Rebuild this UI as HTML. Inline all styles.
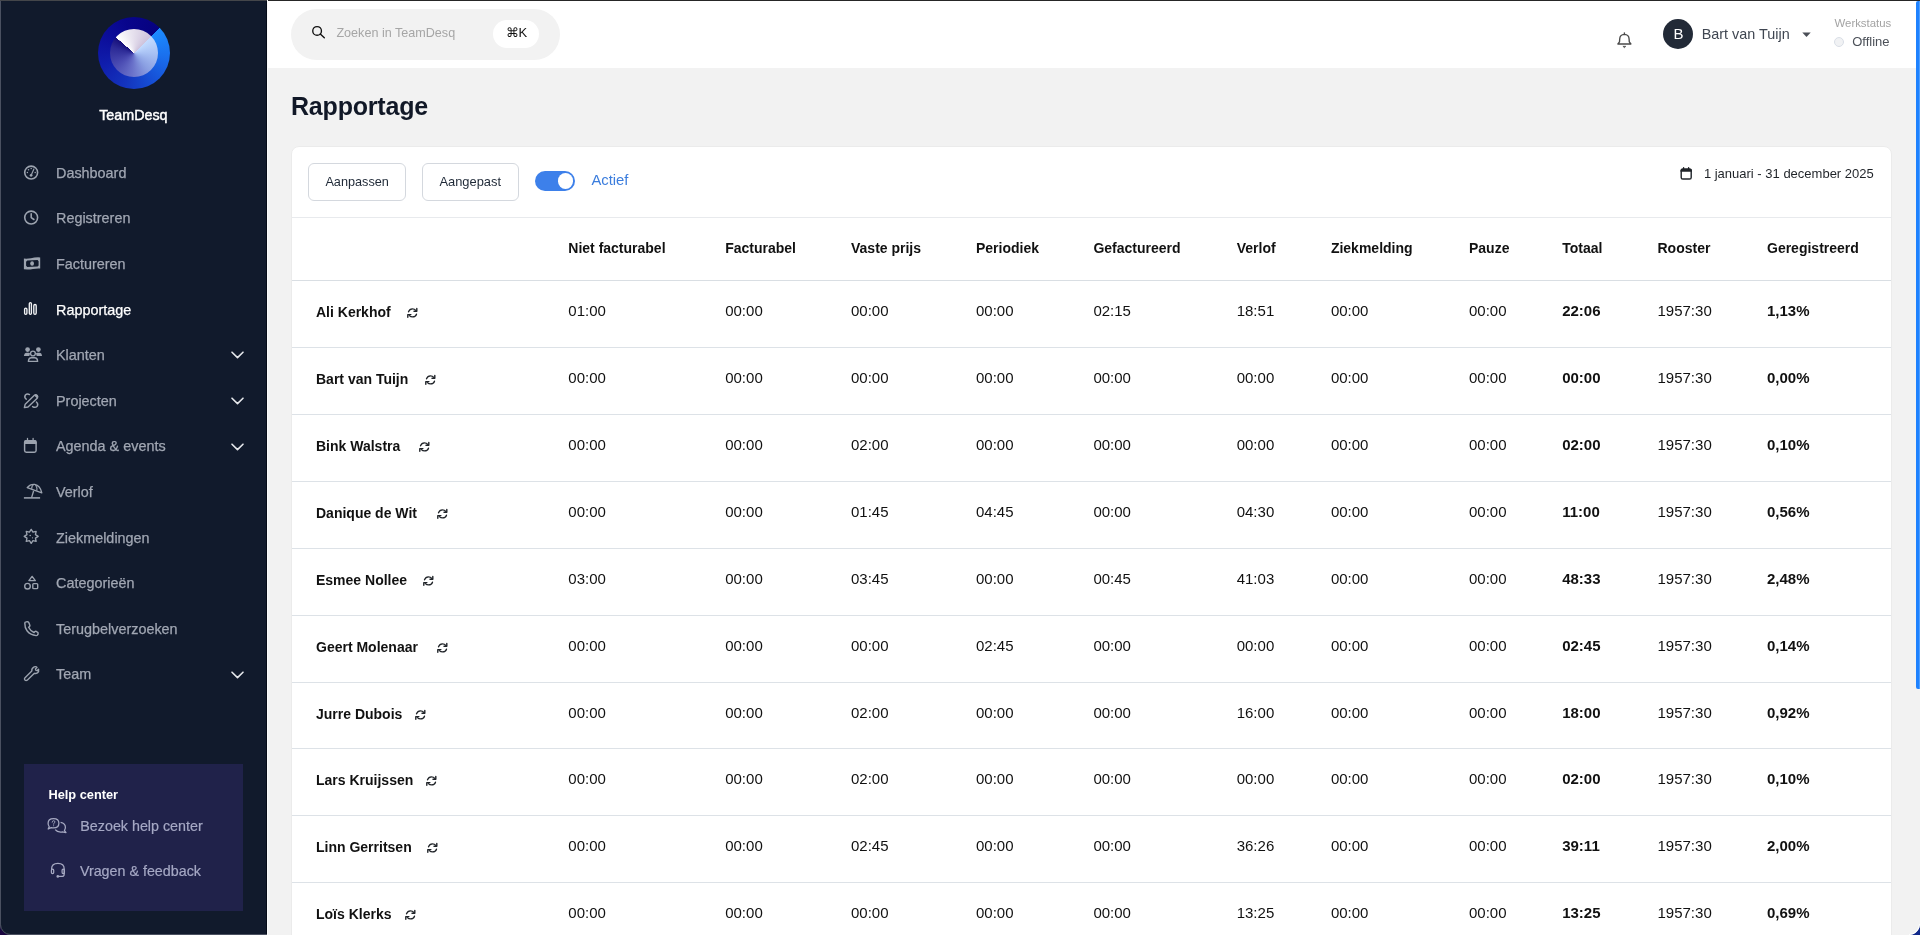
<!DOCTYPE html>
<html><head><meta charset="utf-8"><title>Rapportage - TeamDesq</title>
<style>
html,body{margin:0;padding:0;width:1920px;height:935px;overflow:hidden;background:#f2f2f2;font-family:"Liberation Sans", sans-serif;}
body{position:relative;}
.t{position:absolute;white-space:nowrap;}
.ic{position:absolute;overflow:visible;}
.a{position:absolute;}
</style></head>
<body>
<div class="a" style="left:0;top:0;width:1920px;height:935px;will-change:transform">
<div class="a" style="left:0;top:0;width:267px;height:935px;background:#111a2c"></div>
<div class="a" style="left:0;top:0;width:1px;height:935px;background:#4a5060"></div>
<div class="a" style="left:266px;top:0;width:1px;height:935px;background:#050b18"></div>
<div class="a" style="left:98px;top:17px;width:72px;height:72px;border-radius:50%;background:conic-gradient(from 45deg,#1c8cff 0deg,#1a70ee 50deg,#1650d6 100deg,#1434bd 150deg,#101fae 200deg,#0c0f9c 250deg,#08058c 300deg,#06017f 359.5deg)"></div>
<div class="a" style="left:110px;top:29px;width:48px;height:48px;border-radius:50%;background:conic-gradient(from 45deg,#c4dcff 0deg,#a9c2f4 45deg,#8a9fe2 95deg,#6a72ca 140deg,#4a4bb2 190deg,#2c2a96 240deg,#160f7a 265.5deg,#ffffff 266deg,#ece8f2 300deg,#cfc4dd 359.5deg)"></div>
<div class="t" style="left:99.2px;top:106.6px;font-size:14.3px;line-height:17px;color:#fff;font-weight:400;-webkit-text-stroke:0.45px #fff">TeamDesq</div>
<svg class="ic" style="left:22px;top:164px" width="18" height="18" viewBox="22 164 18 18"><circle cx="31.16" cy="172.55" r="6.45" fill="none" stroke="#9ca3af" stroke-width="1.6"/><path d="M33.9 169.0 L31.5 174.6" stroke="#9ca3af" stroke-width="1.15" stroke-linecap="round"/><circle cx="31.1" cy="175.3" r="1.35" fill="#9ca3af"/><circle cx="27.4" cy="172.6" r="0.75" fill="#9ca3af"/><circle cx="28.5" cy="169.7" r="0.75" fill="#9ca3af"/><circle cx="31.2" cy="168.6" r="0.75" fill="#9ca3af"/><circle cx="35.2" cy="172.6" r="0.75" fill="#9ca3af"/></svg>
<div class="t" style="left:56px;top:164.73px;font-size:14.4px;line-height:17.28px;color:#a1a7b3;font-weight:400;-webkit-text-stroke:0.25px #a1a7b3">Dashboard</div>
<svg class="ic" style="left:22px;top:209px" width="18" height="18" viewBox="22 209 18 18"><circle cx="31.16" cy="217.55" r="6.45" fill="none" stroke="#9ca3af" stroke-width="1.6"/><path d="M31.2 213.8 V217.6 L33.9 219.5" fill="none" stroke="#9ca3af" stroke-width="1.55" stroke-linecap="round" stroke-linejoin="round"/></svg>
<div class="t" style="left:56px;top:210.33px;font-size:14.4px;line-height:17.28px;color:#a1a7b3;font-weight:400;-webkit-text-stroke:0.25px #a1a7b3">Registreren</div>
<svg class="ic" style="left:22px;top:255px" width="20" height="17" viewBox="22 255 20 17"><path fill-rule="evenodd" fill="#9ca3af" d="M23.9 258.6 Q27.5 258.9 31 258.3 Q35 257.1 40.2 257.4 L40.2 268.5 Q36.5 268.3 33 268.9 Q29 269.7 23.9 269.3 Z M27.3 260.5 L37.6 260.1 L38.6 261.2 L38.6 265.5 L37.6 266.5 L27.3 266.9 L26.1 265.8 L26.1 261.7 Z"/><ellipse cx="32.1" cy="263.5" rx="1.9" ry="2.35" fill="#9ca3af"/></svg>
<div class="t" style="left:56px;top:255.93px;font-size:14.4px;line-height:17.28px;color:#a1a7b3;font-weight:400;-webkit-text-stroke:0.25px #a1a7b3">Factureren</div>
<svg class="ic" style="left:22px;top:300px" width="17" height="17" viewBox="22 300 17 17"><rect x="24.6" y="308.1" width="2.3" height="6.2" rx="1.15" fill="none" stroke="#f3f4f6" stroke-width="1.35"/><rect x="29.3" y="302.6" width="2.1" height="11.7" rx="1.05" fill="none" stroke="#f3f4f6" stroke-width="1.35"/><rect x="33.8" y="304.5" width="2.4" height="9.8" rx="1.2" fill="none" stroke="#f3f4f6" stroke-width="1.35"/></svg>
<div class="t" style="left:56px;top:301.53px;font-size:14.4px;line-height:17.28px;color:#ffffff;font-weight:400;-webkit-text-stroke:0.25px #ffffff">Rapportage</div>
<svg class="ic" style="left:22px;top:345px" width="22" height="19" viewBox="22 345 22 19"><circle cx="27.6" cy="349.6" r="2.35" fill="#9ca3af"/><circle cx="38.4" cy="349.6" r="2.35" fill="#9ca3af"/><path d="M23.9 356.1 Q24.3 352.7 26.6 352.7 H28.6 Q29.6 352.7 30.1 353.6 L29.3 356.1 Z" fill="#9ca3af"/><path d="M42.1 356.1 Q41.7 352.7 39.4 352.7 H37.4 Q36.4 352.7 35.9 353.6 L36.7 356.1 Z" fill="#9ca3af"/><circle cx="32.95" cy="353.5" r="2.4" fill="none" stroke="#9ca3af" stroke-width="1.35"/><path d="M28.4 361.4 Q28.6 357.7 31.4 357.7 H34.6 Q37.5 357.7 37.6 361.4 Z" fill="none" stroke="#9ca3af" stroke-width="1.4" stroke-linejoin="round"/></svg>
<div class="t" style="left:56px;top:347.13px;font-size:14.4px;line-height:17.28px;color:#a1a7b3;font-weight:400;-webkit-text-stroke:0.25px #a1a7b3">Klanten</div>
<svg class="ic" style="left:230.5px;top:351.40px" width="13" height="8" viewBox="0 0 13 8"><path d="M1 1.2 L6.5 6.6 L12 1.2" fill="none" stroke="#e5e7eb" stroke-width="1.6" stroke-linecap="round" stroke-linejoin="round"/></svg>
<svg class="ic" style="left:22px;top:391px" width="19" height="19" viewBox="22 391 19 19"><path d="M26.2 399.2 Q23.8 397.4 25.4 395.0 Q27.2 393.2 29.5 394.6" fill="none" stroke="#9ca3af" stroke-width="1.45" stroke-linecap="round"/><path d="M36.4 402.0 Q38.6 404.0 37.2 406.2 Q35.2 408.2 32.6 406.6" fill="none" stroke="#9ca3af" stroke-width="1.45" stroke-linecap="round"/><path d="M24.4 407.6 L25.2 404.2 L34.4 395.2 Q35.8 394.0 37.2 395.4 Q38.4 396.8 37.2 398.2 L28.0 407.0 Z" fill="none" stroke="#9ca3af" stroke-width="1.4" stroke-linejoin="round"/><path d="M34.2 395.4 Q35.8 393.8 37.4 395.2 Q38.8 396.8 37.2 398.4 Z" fill="#9ca3af"/></svg>
<div class="t" style="left:56px;top:392.73px;font-size:14.4px;line-height:17.28px;color:#a1a7b3;font-weight:400;-webkit-text-stroke:0.25px #a1a7b3">Projecten</div>
<svg class="ic" style="left:230.5px;top:397.00px" width="13" height="8" viewBox="0 0 13 8"><path d="M1 1.2 L6.5 6.6 L12 1.2" fill="none" stroke="#e5e7eb" stroke-width="1.6" stroke-linecap="round" stroke-linejoin="round"/></svg>
<svg class="ic" style="left:22px;top:436px" width="17" height="19" viewBox="22 436 17 19"><rect x="24.6" y="440.6" width="11.5" height="11.7" rx="1.7" fill="none" stroke="#9ca3af" stroke-width="1.45"/><path d="M24.2 442.2 Q24.2 440.0 26.2 440.0 H34.6 Q36.6 440.0 36.6 442.2 V443.9 H24.2 Z" fill="#9ca3af"/><path d="M27.5 438.4 V440.6 M33.1 438.4 V440.6" stroke="#9ca3af" stroke-width="1.3" stroke-linecap="round"/></svg>
<div class="t" style="left:56px;top:438.33px;font-size:14.4px;line-height:17.28px;color:#a1a7b3;font-weight:400;-webkit-text-stroke:0.25px #a1a7b3">Agenda &amp; events</div>
<svg class="ic" style="left:230.5px;top:442.60px" width="13" height="8" viewBox="0 0 13 8"><path d="M1 1.2 L6.5 6.6 L12 1.2" fill="none" stroke="#e5e7eb" stroke-width="1.6" stroke-linecap="round" stroke-linejoin="round"/></svg>
<svg class="ic" style="left:22px;top:482px" width="22" height="18" viewBox="22 482 22 18"><path d="M27.2 487.6 Q30.2 484.0 34.6 484.4 Q40.2 485.6 41.8 492.8 Z" fill="none" stroke="#9ca3af" stroke-width="1.35" stroke-linejoin="round"/><path d="M31.8 488.9 Q31.4 486.6 33.4 484.6 M36.8 490.6 Q37.4 487.6 35.6 485.0" fill="none" stroke="#9ca3af" stroke-width="1.1"/><path d="M33.6 491.0 L31.6 497.6" stroke="#9ca3af" stroke-width="1.35"/><path d="M23.9 497.9 H40.1" stroke="#9ca3af" stroke-width="1.55"/></svg>
<div class="t" style="left:56px;top:483.93px;font-size:14.4px;line-height:17.28px;color:#a1a7b3;font-weight:400;-webkit-text-stroke:0.25px #a1a7b3">Verlof</div>
<svg class="ic" style="left:22px;top:527px" width="19" height="19" viewBox="22 527 19 19"><path d="M31.20 529.40 L32.96 532.15 L36.15 531.45 L35.45 534.64 L38.20 536.40 L35.45 538.16 L36.15 541.35 L32.96 540.65 L31.20 543.40 L29.44 540.65 L26.25 541.35 L26.95 538.16 L24.20 536.40 L26.95 534.64 L26.25 531.45 L29.44 532.15 Z" fill="none" stroke="#9ca3af" stroke-width="1.35" stroke-linejoin="round"/><circle cx="30.2" cy="535.5" r="0.8" fill="#9ca3af"/><circle cx="32.5" cy="537.8" r="0.65" fill="#9ca3af"/></svg>
<div class="t" style="left:56px;top:529.53px;font-size:14.4px;line-height:17.28px;color:#a1a7b3;font-weight:400;-webkit-text-stroke:0.25px #a1a7b3">Ziekmeldingen</div>
<svg class="ic" style="left:22px;top:573px" width="19" height="19" viewBox="22 573 19 19"><path d="M32.1 576.4 L35.3 580.6 H28.9 Z" fill="none" stroke="#9ca3af" stroke-width="1.4" stroke-linejoin="round"/><circle cx="27.5" cy="586.2" r="2.8" fill="none" stroke="#9ca3af" stroke-width="1.4"/><rect x="32.8" y="583.6" width="4.9" height="5.0" rx="0.9" fill="none" stroke="#9ca3af" stroke-width="1.4"/></svg>
<div class="t" style="left:56px;top:575.13px;font-size:14.4px;line-height:17.28px;color:#a1a7b3;font-weight:400;-webkit-text-stroke:0.25px #a1a7b3">Categorie&euml;n</div>
<svg class="ic" style="left:22px;top:619px" width="19" height="19" viewBox="22 619 19 19"><path d="M24.8 623.0 Q24.9 622.0 26.0 621.9 L27.6 621.7 Q28.6 621.7 29.0 622.9 L29.9 625.5 Q30.0 626.3 28.6 627.3 Q30.4 631.0 34.0 632.5 Q34.9 631.2 35.7 631.2 L37.7 632.3 Q38.2 632.8 38.1 633.6 L37.9 634.6 Q37.5 635.7 36.2 635.6 Q30.4 635.0 27.2 631.0 Q24.6 627.6 24.8 623.0 Z" fill="none" stroke="#9ca3af" stroke-width="1.45" stroke-linejoin="round"/></svg>
<div class="t" style="left:56px;top:620.73px;font-size:14.4px;line-height:17.28px;color:#a1a7b3;font-weight:400;-webkit-text-stroke:0.25px #a1a7b3">Terugbelverzoeken</div>
<svg class="ic" style="left:22px;top:664px" width="19" height="19" viewBox="22 664 19 19"><path d="M34.2 666.9 Q36.2 666.2 37.0 667.4 L35.4 669.0 L35.9 670.3 L37.2 670.6 L38.6 669.2 Q39.2 671.6 37.4 672.9 Q36.0 673.8 34.4 673.3 L27.2 680.2 Q26.0 681.0 24.9 680.0 Q24.0 679.0 24.8 677.9 L31.8 671.0 Q31.4 668.4 34.2 666.9 Z" fill="none" stroke="#9ca3af" stroke-width="1.35" stroke-linejoin="round"/></svg>
<div class="t" style="left:56px;top:666.33px;font-size:14.4px;line-height:17.28px;color:#a1a7b3;font-weight:400;-webkit-text-stroke:0.25px #a1a7b3">Team</div>
<svg class="ic" style="left:230.5px;top:670.60px" width="13" height="8" viewBox="0 0 13 8"><path d="M1 1.2 L6.5 6.6 L12 1.2" fill="none" stroke="#e5e7eb" stroke-width="1.6" stroke-linecap="round" stroke-linejoin="round"/></svg>
<div style="position:absolute;left:24px;top:764px;width:219px;height:147px;background:#20224a"></div>
<div class="t" style="left:48.4px;top:787.27px;font-size:12.8px;line-height:15.36px;color:#ffffff;font-weight:700;">Help center</div>
<svg class="ic" style="left:46px;top:815px" width="22" height="20" viewBox="46 815 22 20"><path d="M53.5 818.7 Q58.9 818.7 58.9 823.3 Q58.9 827.9 53.5 827.9 Q52.3 827.9 51.2 827.6 L48.2 829.0 L49.2 826.7 Q48.1 825.4 48.1 823.3 Q48.1 818.7 53.5 818.7 Z" fill="none" stroke="#a6a9c2" stroke-width="1.25" stroke-linejoin="round"/><path d="M60.6 822.4 Q65.4 823.4 65.4 827.2 Q65.4 829.2 64.4 830.4 L66.0 832.6 L62.4 831.8 Q61.4 832.0 60.6 832.0 Q57.0 832.0 55.2 829.6" fill="none" stroke="#a6a9c2" stroke-width="1.25" stroke-linejoin="round"/><path d="M52.2 822.2 Q52.3 820.7 53.6 820.7 Q54.9 820.7 54.9 821.9 Q54.9 822.7 54.0 823.1 Q53.6 823.4 53.6 824.2" fill="none" stroke="#a6a9c2" stroke-width="0.9" stroke-linecap="round"/><circle cx="53.6" cy="825.7" r="0.55" fill="#a6a9c2"/></svg>
<div class="t" style="left:80.3px;top:817.78px;font-size:14.3px;line-height:17.16px;color:#a5a8c4;font-weight:400;-webkit-text-stroke:0.2px #a5a8c4">Bezoek help center</div>
<svg class="ic" style="left:48px;top:861px" width="20" height="19" viewBox="48 861 20 19"><path d="M51.6 869.4 V868.8 Q51.6 863.3 57.9 863.3 Q64.2 863.3 64.2 868.8 V874.2 Q64.2 876.4 62.0 876.4 H58.6" fill="none" stroke="#a6a9c2" stroke-width="1.25"/><rect x="51.4" y="869.2" width="2.3" height="4.4" rx="1.1" fill="none" stroke="#a6a9c2" stroke-width="1.25"/><rect x="62.1" y="869.2" width="2.3" height="4.4" rx="1.1" fill="none" stroke="#a6a9c2" stroke-width="1.25"/><circle cx="57.8" cy="876.4" r="1.3" fill="#a6a9c2"/></svg>
<div class="t" style="left:79.9px;top:862.78px;font-size:14.3px;line-height:17.16px;color:#a5a8c4;font-weight:400;-webkit-text-stroke:0.2px #a5a8c4">Vragen &amp; feedback</div>
<div class="a" style="left:267px;top:0;width:1653px;height:68px;background:#ffffff"></div>
<div class="a" style="left:291px;top:9px;width:269px;height:51px;border-radius:26px;background:#f2f2f2"></div>
<svg class="ic" style="left:310px;top:24px" width="17" height="17" viewBox="310 24 17 17"><circle cx="317.1" cy="30.9" r="4.35" fill="none" stroke="#111" stroke-width="1.35"/><path d="M320.3 34.1 L324.3 37.8" stroke="#111" stroke-width="1.4" stroke-linecap="round"/></svg>
<div class="t" style="left:336.4px;top:25.7px;font-size:12.6px;line-height:15px;color:#a6a6a6">Zoeken in TeamDesq</div>
<div class="a" style="left:493px;top:20px;width:46px;height:28px;border-radius:14px;background:#fff"></div>
<div class="t" style="left:505.5px;top:25px;font-size:13px;line-height:16px;color:#111">&#8984;K</div>
<svg class="ic" style="left:1615px;top:30px" width="18" height="20" viewBox="1615 30 18 20"><path d="M1624.4 34.3 Q1628.9 34.5 1629.1 39.0 L1629.3 41.9 L1630.9 44.0 H1617.9 L1619.5 41.9 L1619.7 39.0 Q1619.9 34.5 1624.4 34.3 Z" fill="none" stroke="#4a4a4a" stroke-width="1.35" stroke-linejoin="round"/><path d="M1624.4 32.8 V34.3" stroke="#4a4a4a" stroke-width="1.3" stroke-linecap="round"/><path d="M1622.9 46.3 H1625.9 L1624.4 47.7 Z" fill="#4a4a4a" stroke="#4a4a4a" stroke-width="0.6" stroke-linejoin="round"/></svg>
<div class="a" style="left:1663px;top:19px;width:30px;height:30px;border-radius:50%;background:#222a37"></div>
<div class="t" style="left:1673.5px;top:24.8px;font-size:15px;line-height:18px;color:#fff">B</div>
<div class="t" style="left:1701.7px;top:26px;font-size:14.4px;line-height:17px;color:#3f4651">Bart van Tuijn</div>
<svg class="ic" style="left:1802px;top:31.5px" width="9" height="6" viewBox="0 0 9 6"><path d="M0.3 0.5 H8.7 L4.5 5 Z" fill="#4b4f57"/></svg>
<div class="t" style="left:1834.5px;top:16.4px;font-size:11.4px;line-height:14px;color:#a3a3a3">Werkstatus</div>
<div class="a" style="left:1834px;top:37px;width:8px;height:8px;border-radius:50%;background:#f1f2f4;border:1px solid #d9dee6"></div>
<div class="t" style="left:1852.2px;top:33.6px;font-size:13px;line-height:16px;color:#4b5058">Offline</div>
<div class="a" style="left:0;top:0;width:267px;height:1px;background:#44464a"></div>
<div class="a" style="left:267px;top:0;width:1653px;height:1px;background:#262626"></div>
<div class="a" style="left:1916px;top:1px;width:4px;height:688px;background:#1e82ff;border-radius:2px 0 0 2px;box-shadow:inset -1px 0 0 #4f9fff"></div>
<div class="t" style="left:291px;top:90.5px;font-size:25px;line-height:30px;color:#111827;font-weight:700;letter-spacing:-0.2px">Rapportage</div>
<div class="a" style="left:291px;top:146px;width:1601px;height:820px;background:#ffffff;border-radius:8px;border:1px solid #ebebeb;box-sizing:border-box"></div>
<div class="a" style="left:308px;top:163px;width:96px;height:36px;border:1px solid #d4d8de;border-radius:6px;background:#fff"></div>
<div class="a" style="left:422px;top:163px;width:95px;height:36px;border:1px solid #d4d8de;border-radius:6px;background:#fff"></div>
<div class="t" style="left:325.4px;top:174.93px;font-size:12.7px;line-height:15.24px;color:#1f2937;font-weight:400;">Aanpassen</div>
<div class="t" style="left:439.4px;top:174.01px;font-size:12.9px;line-height:15.48px;color:#1f2937;font-weight:400;">Aangepast</div>
<div class="a" style="left:535px;top:171px;width:40px;height:20px;border-radius:10px;background:#3d80ea"></div>
<div class="a" style="left:557.6px;top:173.4px;width:15.4px;height:15.4px;border-radius:50%;background:#fff"></div>
<div class="t" style="left:591.4px;top:171.99px;font-size:14.8px;line-height:17.76px;color:#3b7ddd;font-weight:400;">Actief</div>
<svg class="ic" style="left:1679px;top:165px" width="15" height="16" viewBox="1679 165 15 16"><rect x="1681.2" y="169.2" width="10.0" height="9.8" rx="1.6" fill="none" stroke="#1f2328" stroke-width="1.4"/><path d="M1680.5 170.6 Q1680.5 168.6 1682.4 168.6 H1690.0 Q1691.9 168.6 1691.9 170.6 V171.8 H1680.5 Z" fill="#1f2328"/><path d="M1683.6 167.6 V169.0 M1688.6 167.6 V169.0" stroke="#1f2328" stroke-width="1.3" stroke-linecap="round"/></svg>
<div class="t" style="left:1703.9px;top:165.85px;font-size:13px;line-height:15.6px;color:#1f2328;font-weight:400;">1 januari - 31 december 2025</div>
<div class="a" style="left:292px;top:217px;width:1599px;height:1px;background:#e8eaed"></div>
<div class="t" style="left:568.3px;top:240.06px;font-size:14px;line-height:16.8px;color:#111111;font-weight:700;">Niet facturabel</div>
<div class="t" style="left:725.2px;top:240.06px;font-size:14px;line-height:16.8px;color:#111111;font-weight:700;">Facturabel</div>
<div class="t" style="left:851px;top:240.06px;font-size:14px;line-height:16.8px;color:#111111;font-weight:700;">Vaste prijs</div>
<div class="t" style="left:976px;top:240.06px;font-size:14px;line-height:16.8px;color:#111111;font-weight:700;">Periodiek</div>
<div class="t" style="left:1093.4px;top:240.06px;font-size:14px;line-height:16.8px;color:#111111;font-weight:700;">Gefactureerd</div>
<div class="t" style="left:1236.7px;top:240.06px;font-size:14px;line-height:16.8px;color:#111111;font-weight:700;">Verlof</div>
<div class="t" style="left:1330.9px;top:240.06px;font-size:14px;line-height:16.8px;color:#111111;font-weight:700;">Ziekmelding</div>
<div class="t" style="left:1469px;top:240.06px;font-size:14px;line-height:16.8px;color:#111111;font-weight:700;">Pauze</div>
<div class="t" style="left:1562.2px;top:240.06px;font-size:14px;line-height:16.8px;color:#111111;font-weight:700;">Totaal</div>
<div class="t" style="left:1657.5px;top:240.06px;font-size:14px;line-height:16.8px;color:#111111;font-weight:700;">Rooster</div>
<div class="t" style="left:1767px;top:240.06px;font-size:14px;line-height:16.8px;color:#111111;font-weight:700;">Geregistreerd</div>
<div style="position:absolute;left:292px;top:280px;width:1599px;height:1px;background:#d9dee3"></div>
<div class="t" style="left:316px;top:303.96px;font-size:14px;line-height:16.8px;color:#111111;font-weight:700;">Ali Kerkhof</div>
<svg class="ic" style="left:406.2px;top:306.8px" width="13" height="12" viewBox="406.2 306.8 13 12"><path d="M408.70 311.60 Q409.80 308.60 412.60 308.60 Q414.80 308.60 416.00 310.20" fill="none" stroke="#1f2328" stroke-width="1.3" stroke-linecap="round"/><path d="M417.00 308.30 V311.10 H414.20" fill="none" stroke="#1f2328" stroke-width="1.4" stroke-linecap="round" stroke-linejoin="round"/><path d="M416.70 314.00 Q415.80 316.70 412.80 316.70 Q410.80 316.70 409.60 315.40" fill="none" stroke="#1f2328" stroke-width="1.3" stroke-linecap="round"/><path d="M408.00 317.10 V314.40 H411.10" fill="none" stroke="#1f2328" stroke-width="1.4" stroke-linecap="round" stroke-linejoin="round"/></svg>
<div class="t" style="left:568.3px;top:302.27px;font-size:15px;line-height:18.0px;color:#111111;font-weight:400;">01:00</div>
<div class="t" style="left:725.2px;top:302.27px;font-size:15px;line-height:18.0px;color:#111111;font-weight:400;">00:00</div>
<div class="t" style="left:851px;top:302.27px;font-size:15px;line-height:18.0px;color:#111111;font-weight:400;">00:00</div>
<div class="t" style="left:976px;top:302.27px;font-size:15px;line-height:18.0px;color:#111111;font-weight:400;">00:00</div>
<div class="t" style="left:1093.4px;top:302.27px;font-size:15px;line-height:18.0px;color:#111111;font-weight:400;">02:15</div>
<div class="t" style="left:1236.7px;top:302.27px;font-size:15px;line-height:18.0px;color:#111111;font-weight:400;">18:51</div>
<div class="t" style="left:1330.9px;top:302.27px;font-size:15px;line-height:18.0px;color:#111111;font-weight:400;">00:00</div>
<div class="t" style="left:1469px;top:302.27px;font-size:15px;line-height:18.0px;color:#111111;font-weight:400;">00:00</div>
<div class="t" style="left:1562.2px;top:302.27px;font-size:15px;line-height:18.0px;color:#111111;font-weight:700;">22:06</div>
<div class="t" style="left:1657.5px;top:302.27px;font-size:15px;line-height:18.0px;color:#111111;font-weight:400;">1957:30</div>
<div class="t" style="left:1767px;top:302.27px;font-size:15px;line-height:18.0px;color:#111111;font-weight:700;">1,13%</div>
<div style="position:absolute;left:292px;top:347px;width:1599px;height:1px;background:#dde2e7"></div>
<div class="t" style="left:316px;top:370.96px;font-size:14px;line-height:16.8px;color:#111111;font-weight:700;">Bart van Tuijn</div>
<svg class="ic" style="left:424px;top:373.8px" width="13" height="12" viewBox="424 373.8 13 12"><path d="M426.50 378.60 Q427.60 375.60 430.40 375.60 Q432.60 375.60 433.80 377.20" fill="none" stroke="#1f2328" stroke-width="1.3" stroke-linecap="round"/><path d="M434.80 375.30 V378.10 H432.00" fill="none" stroke="#1f2328" stroke-width="1.4" stroke-linecap="round" stroke-linejoin="round"/><path d="M434.50 381.00 Q433.60 383.70 430.60 383.70 Q428.60 383.70 427.40 382.40" fill="none" stroke="#1f2328" stroke-width="1.3" stroke-linecap="round"/><path d="M425.80 384.10 V381.40 H428.90" fill="none" stroke="#1f2328" stroke-width="1.4" stroke-linecap="round" stroke-linejoin="round"/></svg>
<div class="t" style="left:568.3px;top:369.27px;font-size:15px;line-height:18.0px;color:#111111;font-weight:400;">00:00</div>
<div class="t" style="left:725.2px;top:369.27px;font-size:15px;line-height:18.0px;color:#111111;font-weight:400;">00:00</div>
<div class="t" style="left:851px;top:369.27px;font-size:15px;line-height:18.0px;color:#111111;font-weight:400;">00:00</div>
<div class="t" style="left:976px;top:369.27px;font-size:15px;line-height:18.0px;color:#111111;font-weight:400;">00:00</div>
<div class="t" style="left:1093.4px;top:369.27px;font-size:15px;line-height:18.0px;color:#111111;font-weight:400;">00:00</div>
<div class="t" style="left:1236.7px;top:369.27px;font-size:15px;line-height:18.0px;color:#111111;font-weight:400;">00:00</div>
<div class="t" style="left:1330.9px;top:369.27px;font-size:15px;line-height:18.0px;color:#111111;font-weight:400;">00:00</div>
<div class="t" style="left:1469px;top:369.27px;font-size:15px;line-height:18.0px;color:#111111;font-weight:400;">00:00</div>
<div class="t" style="left:1562.2px;top:369.27px;font-size:15px;line-height:18.0px;color:#111111;font-weight:700;">00:00</div>
<div class="t" style="left:1657.5px;top:369.27px;font-size:15px;line-height:18.0px;color:#111111;font-weight:400;">1957:30</div>
<div class="t" style="left:1767px;top:369.27px;font-size:15px;line-height:18.0px;color:#111111;font-weight:700;">0,00%</div>
<div style="position:absolute;left:292px;top:414px;width:1599px;height:1px;background:#dde2e7"></div>
<div class="t" style="left:316px;top:437.96px;font-size:14px;line-height:16.8px;color:#111111;font-weight:700;">Bink Walstra</div>
<svg class="ic" style="left:418.1px;top:440.8px" width="13" height="12" viewBox="418.1 440.8 13 12"><path d="M420.60 445.60 Q421.70 442.60 424.50 442.60 Q426.70 442.60 427.90 444.20" fill="none" stroke="#1f2328" stroke-width="1.3" stroke-linecap="round"/><path d="M428.90 442.30 V445.10 H426.10" fill="none" stroke="#1f2328" stroke-width="1.4" stroke-linecap="round" stroke-linejoin="round"/><path d="M428.60 448.00 Q427.70 450.70 424.70 450.70 Q422.70 450.70 421.50 449.40" fill="none" stroke="#1f2328" stroke-width="1.3" stroke-linecap="round"/><path d="M419.90 451.10 V448.40 H423.00" fill="none" stroke="#1f2328" stroke-width="1.4" stroke-linecap="round" stroke-linejoin="round"/></svg>
<div class="t" style="left:568.3px;top:436.27px;font-size:15px;line-height:18.0px;color:#111111;font-weight:400;">00:00</div>
<div class="t" style="left:725.2px;top:436.27px;font-size:15px;line-height:18.0px;color:#111111;font-weight:400;">00:00</div>
<div class="t" style="left:851px;top:436.27px;font-size:15px;line-height:18.0px;color:#111111;font-weight:400;">02:00</div>
<div class="t" style="left:976px;top:436.27px;font-size:15px;line-height:18.0px;color:#111111;font-weight:400;">00:00</div>
<div class="t" style="left:1093.4px;top:436.27px;font-size:15px;line-height:18.0px;color:#111111;font-weight:400;">00:00</div>
<div class="t" style="left:1236.7px;top:436.27px;font-size:15px;line-height:18.0px;color:#111111;font-weight:400;">00:00</div>
<div class="t" style="left:1330.9px;top:436.27px;font-size:15px;line-height:18.0px;color:#111111;font-weight:400;">00:00</div>
<div class="t" style="left:1469px;top:436.27px;font-size:15px;line-height:18.0px;color:#111111;font-weight:400;">00:00</div>
<div class="t" style="left:1562.2px;top:436.27px;font-size:15px;line-height:18.0px;color:#111111;font-weight:700;">02:00</div>
<div class="t" style="left:1657.5px;top:436.27px;font-size:15px;line-height:18.0px;color:#111111;font-weight:400;">1957:30</div>
<div class="t" style="left:1767px;top:436.27px;font-size:15px;line-height:18.0px;color:#111111;font-weight:700;">0,10%</div>
<div style="position:absolute;left:292px;top:481px;width:1599px;height:1px;background:#dde2e7"></div>
<div class="t" style="left:316px;top:504.96px;font-size:14px;line-height:16.8px;color:#111111;font-weight:700;">Danique de Wit</div>
<svg class="ic" style="left:435.7px;top:507.8px" width="13" height="12" viewBox="435.7 507.8 13 12"><path d="M438.20 512.60 Q439.30 509.60 442.10 509.60 Q444.30 509.60 445.50 511.20" fill="none" stroke="#1f2328" stroke-width="1.3" stroke-linecap="round"/><path d="M446.50 509.30 V512.10 H443.70" fill="none" stroke="#1f2328" stroke-width="1.4" stroke-linecap="round" stroke-linejoin="round"/><path d="M446.20 515.00 Q445.30 517.70 442.30 517.70 Q440.30 517.70 439.10 516.40" fill="none" stroke="#1f2328" stroke-width="1.3" stroke-linecap="round"/><path d="M437.50 518.10 V515.40 H440.60" fill="none" stroke="#1f2328" stroke-width="1.4" stroke-linecap="round" stroke-linejoin="round"/></svg>
<div class="t" style="left:568.3px;top:503.27px;font-size:15px;line-height:18.0px;color:#111111;font-weight:400;">00:00</div>
<div class="t" style="left:725.2px;top:503.27px;font-size:15px;line-height:18.0px;color:#111111;font-weight:400;">00:00</div>
<div class="t" style="left:851px;top:503.27px;font-size:15px;line-height:18.0px;color:#111111;font-weight:400;">01:45</div>
<div class="t" style="left:976px;top:503.27px;font-size:15px;line-height:18.0px;color:#111111;font-weight:400;">04:45</div>
<div class="t" style="left:1093.4px;top:503.27px;font-size:15px;line-height:18.0px;color:#111111;font-weight:400;">00:00</div>
<div class="t" style="left:1236.7px;top:503.27px;font-size:15px;line-height:18.0px;color:#111111;font-weight:400;">04:30</div>
<div class="t" style="left:1330.9px;top:503.27px;font-size:15px;line-height:18.0px;color:#111111;font-weight:400;">00:00</div>
<div class="t" style="left:1469px;top:503.27px;font-size:15px;line-height:18.0px;color:#111111;font-weight:400;">00:00</div>
<div class="t" style="left:1562.2px;top:503.27px;font-size:15px;line-height:18.0px;color:#111111;font-weight:700;">11:00</div>
<div class="t" style="left:1657.5px;top:503.27px;font-size:15px;line-height:18.0px;color:#111111;font-weight:400;">1957:30</div>
<div class="t" style="left:1767px;top:503.27px;font-size:15px;line-height:18.0px;color:#111111;font-weight:700;">0,56%</div>
<div style="position:absolute;left:292px;top:548px;width:1599px;height:1px;background:#dde2e7"></div>
<div class="t" style="left:316px;top:571.96px;font-size:14px;line-height:16.8px;color:#111111;font-weight:700;">Esmee Nollee</div>
<svg class="ic" style="left:422.3px;top:574.8px" width="13" height="12" viewBox="422.3 574.8 13 12"><path d="M424.80 579.60 Q425.90 576.60 428.70 576.60 Q430.90 576.60 432.10 578.20" fill="none" stroke="#1f2328" stroke-width="1.3" stroke-linecap="round"/><path d="M433.10 576.30 V579.10 H430.30" fill="none" stroke="#1f2328" stroke-width="1.4" stroke-linecap="round" stroke-linejoin="round"/><path d="M432.80 582.00 Q431.90 584.70 428.90 584.70 Q426.90 584.70 425.70 583.40" fill="none" stroke="#1f2328" stroke-width="1.3" stroke-linecap="round"/><path d="M424.10 585.10 V582.40 H427.20" fill="none" stroke="#1f2328" stroke-width="1.4" stroke-linecap="round" stroke-linejoin="round"/></svg>
<div class="t" style="left:568.3px;top:570.27px;font-size:15px;line-height:18.0px;color:#111111;font-weight:400;">03:00</div>
<div class="t" style="left:725.2px;top:570.27px;font-size:15px;line-height:18.0px;color:#111111;font-weight:400;">00:00</div>
<div class="t" style="left:851px;top:570.27px;font-size:15px;line-height:18.0px;color:#111111;font-weight:400;">03:45</div>
<div class="t" style="left:976px;top:570.27px;font-size:15px;line-height:18.0px;color:#111111;font-weight:400;">00:00</div>
<div class="t" style="left:1093.4px;top:570.27px;font-size:15px;line-height:18.0px;color:#111111;font-weight:400;">00:45</div>
<div class="t" style="left:1236.7px;top:570.27px;font-size:15px;line-height:18.0px;color:#111111;font-weight:400;">41:03</div>
<div class="t" style="left:1330.9px;top:570.27px;font-size:15px;line-height:18.0px;color:#111111;font-weight:400;">00:00</div>
<div class="t" style="left:1469px;top:570.27px;font-size:15px;line-height:18.0px;color:#111111;font-weight:400;">00:00</div>
<div class="t" style="left:1562.2px;top:570.27px;font-size:15px;line-height:18.0px;color:#111111;font-weight:700;">48:33</div>
<div class="t" style="left:1657.5px;top:570.27px;font-size:15px;line-height:18.0px;color:#111111;font-weight:400;">1957:30</div>
<div class="t" style="left:1767px;top:570.27px;font-size:15px;line-height:18.0px;color:#111111;font-weight:700;">2,48%</div>
<div style="position:absolute;left:292px;top:615px;width:1599px;height:1px;background:#dde2e7"></div>
<div class="t" style="left:316px;top:638.96px;font-size:14px;line-height:16.8px;color:#111111;font-weight:700;">Geert Molenaar</div>
<svg class="ic" style="left:435.7px;top:641.8px" width="13" height="12" viewBox="435.7 641.8 13 12"><path d="M438.20 646.60 Q439.30 643.60 442.10 643.60 Q444.30 643.60 445.50 645.20" fill="none" stroke="#1f2328" stroke-width="1.3" stroke-linecap="round"/><path d="M446.50 643.30 V646.10 H443.70" fill="none" stroke="#1f2328" stroke-width="1.4" stroke-linecap="round" stroke-linejoin="round"/><path d="M446.20 649.00 Q445.30 651.70 442.30 651.70 Q440.30 651.70 439.10 650.40" fill="none" stroke="#1f2328" stroke-width="1.3" stroke-linecap="round"/><path d="M437.50 652.10 V649.40 H440.60" fill="none" stroke="#1f2328" stroke-width="1.4" stroke-linecap="round" stroke-linejoin="round"/></svg>
<div class="t" style="left:568.3px;top:637.27px;font-size:15px;line-height:18.0px;color:#111111;font-weight:400;">00:00</div>
<div class="t" style="left:725.2px;top:637.27px;font-size:15px;line-height:18.0px;color:#111111;font-weight:400;">00:00</div>
<div class="t" style="left:851px;top:637.27px;font-size:15px;line-height:18.0px;color:#111111;font-weight:400;">00:00</div>
<div class="t" style="left:976px;top:637.27px;font-size:15px;line-height:18.0px;color:#111111;font-weight:400;">02:45</div>
<div class="t" style="left:1093.4px;top:637.27px;font-size:15px;line-height:18.0px;color:#111111;font-weight:400;">00:00</div>
<div class="t" style="left:1236.7px;top:637.27px;font-size:15px;line-height:18.0px;color:#111111;font-weight:400;">00:00</div>
<div class="t" style="left:1330.9px;top:637.27px;font-size:15px;line-height:18.0px;color:#111111;font-weight:400;">00:00</div>
<div class="t" style="left:1469px;top:637.27px;font-size:15px;line-height:18.0px;color:#111111;font-weight:400;">00:00</div>
<div class="t" style="left:1562.2px;top:637.27px;font-size:15px;line-height:18.0px;color:#111111;font-weight:700;">02:45</div>
<div class="t" style="left:1657.5px;top:637.27px;font-size:15px;line-height:18.0px;color:#111111;font-weight:400;">1957:30</div>
<div class="t" style="left:1767px;top:637.27px;font-size:15px;line-height:18.0px;color:#111111;font-weight:700;">0,14%</div>
<div style="position:absolute;left:292px;top:682px;width:1599px;height:1px;background:#dde2e7"></div>
<div class="t" style="left:316px;top:705.96px;font-size:14px;line-height:16.8px;color:#111111;font-weight:700;">Jurre Dubois</div>
<svg class="ic" style="left:414.4px;top:708.8px" width="13" height="12" viewBox="414.4 708.8 13 12"><path d="M416.90 713.60 Q418.00 710.60 420.80 710.60 Q423.00 710.60 424.20 712.20" fill="none" stroke="#1f2328" stroke-width="1.3" stroke-linecap="round"/><path d="M425.20 710.30 V713.10 H422.40" fill="none" stroke="#1f2328" stroke-width="1.4" stroke-linecap="round" stroke-linejoin="round"/><path d="M424.90 716.00 Q424.00 718.70 421.00 718.70 Q419.00 718.70 417.80 717.40" fill="none" stroke="#1f2328" stroke-width="1.3" stroke-linecap="round"/><path d="M416.20 719.10 V716.40 H419.30" fill="none" stroke="#1f2328" stroke-width="1.4" stroke-linecap="round" stroke-linejoin="round"/></svg>
<div class="t" style="left:568.3px;top:704.27px;font-size:15px;line-height:18.0px;color:#111111;font-weight:400;">00:00</div>
<div class="t" style="left:725.2px;top:704.27px;font-size:15px;line-height:18.0px;color:#111111;font-weight:400;">00:00</div>
<div class="t" style="left:851px;top:704.27px;font-size:15px;line-height:18.0px;color:#111111;font-weight:400;">02:00</div>
<div class="t" style="left:976px;top:704.27px;font-size:15px;line-height:18.0px;color:#111111;font-weight:400;">00:00</div>
<div class="t" style="left:1093.4px;top:704.27px;font-size:15px;line-height:18.0px;color:#111111;font-weight:400;">00:00</div>
<div class="t" style="left:1236.7px;top:704.27px;font-size:15px;line-height:18.0px;color:#111111;font-weight:400;">16:00</div>
<div class="t" style="left:1330.9px;top:704.27px;font-size:15px;line-height:18.0px;color:#111111;font-weight:400;">00:00</div>
<div class="t" style="left:1469px;top:704.27px;font-size:15px;line-height:18.0px;color:#111111;font-weight:400;">00:00</div>
<div class="t" style="left:1562.2px;top:704.27px;font-size:15px;line-height:18.0px;color:#111111;font-weight:700;">18:00</div>
<div class="t" style="left:1657.5px;top:704.27px;font-size:15px;line-height:18.0px;color:#111111;font-weight:400;">1957:30</div>
<div class="t" style="left:1767px;top:704.27px;font-size:15px;line-height:18.0px;color:#111111;font-weight:700;">0,92%</div>
<div style="position:absolute;left:292px;top:748px;width:1599px;height:1px;background:#dde2e7"></div>
<div class="t" style="left:316px;top:771.96px;font-size:14px;line-height:16.8px;color:#111111;font-weight:700;">Lars Kruijssen</div>
<svg class="ic" style="left:424.8px;top:774.8px" width="13" height="12" viewBox="424.8 774.8 13 12"><path d="M427.30 779.60 Q428.40 776.60 431.20 776.60 Q433.40 776.60 434.60 778.20" fill="none" stroke="#1f2328" stroke-width="1.3" stroke-linecap="round"/><path d="M435.60 776.30 V779.10 H432.80" fill="none" stroke="#1f2328" stroke-width="1.4" stroke-linecap="round" stroke-linejoin="round"/><path d="M435.30 782.00 Q434.40 784.70 431.40 784.70 Q429.40 784.70 428.20 783.40" fill="none" stroke="#1f2328" stroke-width="1.3" stroke-linecap="round"/><path d="M426.60 785.10 V782.40 H429.70" fill="none" stroke="#1f2328" stroke-width="1.4" stroke-linecap="round" stroke-linejoin="round"/></svg>
<div class="t" style="left:568.3px;top:770.27px;font-size:15px;line-height:18.0px;color:#111111;font-weight:400;">00:00</div>
<div class="t" style="left:725.2px;top:770.27px;font-size:15px;line-height:18.0px;color:#111111;font-weight:400;">00:00</div>
<div class="t" style="left:851px;top:770.27px;font-size:15px;line-height:18.0px;color:#111111;font-weight:400;">02:00</div>
<div class="t" style="left:976px;top:770.27px;font-size:15px;line-height:18.0px;color:#111111;font-weight:400;">00:00</div>
<div class="t" style="left:1093.4px;top:770.27px;font-size:15px;line-height:18.0px;color:#111111;font-weight:400;">00:00</div>
<div class="t" style="left:1236.7px;top:770.27px;font-size:15px;line-height:18.0px;color:#111111;font-weight:400;">00:00</div>
<div class="t" style="left:1330.9px;top:770.27px;font-size:15px;line-height:18.0px;color:#111111;font-weight:400;">00:00</div>
<div class="t" style="left:1469px;top:770.27px;font-size:15px;line-height:18.0px;color:#111111;font-weight:400;">00:00</div>
<div class="t" style="left:1562.2px;top:770.27px;font-size:15px;line-height:18.0px;color:#111111;font-weight:700;">02:00</div>
<div class="t" style="left:1657.5px;top:770.27px;font-size:15px;line-height:18.0px;color:#111111;font-weight:400;">1957:30</div>
<div class="t" style="left:1767px;top:770.27px;font-size:15px;line-height:18.0px;color:#111111;font-weight:700;">0,10%</div>
<div style="position:absolute;left:292px;top:815px;width:1599px;height:1px;background:#dde2e7"></div>
<div class="t" style="left:316px;top:838.96px;font-size:14px;line-height:16.8px;color:#111111;font-weight:700;">Linn Gerritsen</div>
<svg class="ic" style="left:425.7px;top:841.8px" width="13" height="12" viewBox="425.7 841.8 13 12"><path d="M428.20 846.60 Q429.30 843.60 432.10 843.60 Q434.30 843.60 435.50 845.20" fill="none" stroke="#1f2328" stroke-width="1.3" stroke-linecap="round"/><path d="M436.50 843.30 V846.10 H433.70" fill="none" stroke="#1f2328" stroke-width="1.4" stroke-linecap="round" stroke-linejoin="round"/><path d="M436.20 849.00 Q435.30 851.70 432.30 851.70 Q430.30 851.70 429.10 850.40" fill="none" stroke="#1f2328" stroke-width="1.3" stroke-linecap="round"/><path d="M427.50 852.10 V849.40 H430.60" fill="none" stroke="#1f2328" stroke-width="1.4" stroke-linecap="round" stroke-linejoin="round"/></svg>
<div class="t" style="left:568.3px;top:837.27px;font-size:15px;line-height:18.0px;color:#111111;font-weight:400;">00:00</div>
<div class="t" style="left:725.2px;top:837.27px;font-size:15px;line-height:18.0px;color:#111111;font-weight:400;">00:00</div>
<div class="t" style="left:851px;top:837.27px;font-size:15px;line-height:18.0px;color:#111111;font-weight:400;">02:45</div>
<div class="t" style="left:976px;top:837.27px;font-size:15px;line-height:18.0px;color:#111111;font-weight:400;">00:00</div>
<div class="t" style="left:1093.4px;top:837.27px;font-size:15px;line-height:18.0px;color:#111111;font-weight:400;">00:00</div>
<div class="t" style="left:1236.7px;top:837.27px;font-size:15px;line-height:18.0px;color:#111111;font-weight:400;">36:26</div>
<div class="t" style="left:1330.9px;top:837.27px;font-size:15px;line-height:18.0px;color:#111111;font-weight:400;">00:00</div>
<div class="t" style="left:1469px;top:837.27px;font-size:15px;line-height:18.0px;color:#111111;font-weight:400;">00:00</div>
<div class="t" style="left:1562.2px;top:837.27px;font-size:15px;line-height:18.0px;color:#111111;font-weight:700;">39:11</div>
<div class="t" style="left:1657.5px;top:837.27px;font-size:15px;line-height:18.0px;color:#111111;font-weight:400;">1957:30</div>
<div class="t" style="left:1767px;top:837.27px;font-size:15px;line-height:18.0px;color:#111111;font-weight:700;">2,00%</div>
<div style="position:absolute;left:292px;top:882px;width:1599px;height:1px;background:#dde2e7"></div>
<div class="t" style="left:316px;top:905.96px;font-size:14px;line-height:16.8px;color:#111111;font-weight:700;">Lo&iuml;s Klerks</div>
<svg class="ic" style="left:404px;top:908.8px" width="13" height="12" viewBox="404 908.8 13 12"><path d="M406.50 913.60 Q407.60 910.60 410.40 910.60 Q412.60 910.60 413.80 912.20" fill="none" stroke="#1f2328" stroke-width="1.3" stroke-linecap="round"/><path d="M414.80 910.30 V913.10 H412.00" fill="none" stroke="#1f2328" stroke-width="1.4" stroke-linecap="round" stroke-linejoin="round"/><path d="M414.50 916.00 Q413.60 918.70 410.60 918.70 Q408.60 918.70 407.40 917.40" fill="none" stroke="#1f2328" stroke-width="1.3" stroke-linecap="round"/><path d="M405.80 919.10 V916.40 H408.90" fill="none" stroke="#1f2328" stroke-width="1.4" stroke-linecap="round" stroke-linejoin="round"/></svg>
<div class="t" style="left:568.3px;top:904.27px;font-size:15px;line-height:18.0px;color:#111111;font-weight:400;">00:00</div>
<div class="t" style="left:725.2px;top:904.27px;font-size:15px;line-height:18.0px;color:#111111;font-weight:400;">00:00</div>
<div class="t" style="left:851px;top:904.27px;font-size:15px;line-height:18.0px;color:#111111;font-weight:400;">00:00</div>
<div class="t" style="left:976px;top:904.27px;font-size:15px;line-height:18.0px;color:#111111;font-weight:400;">00:00</div>
<div class="t" style="left:1093.4px;top:904.27px;font-size:15px;line-height:18.0px;color:#111111;font-weight:400;">00:00</div>
<div class="t" style="left:1236.7px;top:904.27px;font-size:15px;line-height:18.0px;color:#111111;font-weight:400;">13:25</div>
<div class="t" style="left:1330.9px;top:904.27px;font-size:15px;line-height:18.0px;color:#111111;font-weight:400;">00:00</div>
<div class="t" style="left:1469px;top:904.27px;font-size:15px;line-height:18.0px;color:#111111;font-weight:400;">00:00</div>
<div class="t" style="left:1562.2px;top:904.27px;font-size:15px;line-height:18.0px;color:#111111;font-weight:700;">13:25</div>
<div class="t" style="left:1657.5px;top:904.27px;font-size:15px;line-height:18.0px;color:#111111;font-weight:400;">1957:30</div>
<div class="t" style="left:1767px;top:904.27px;font-size:15px;line-height:18.0px;color:#111111;font-weight:700;">0,69%</div>
<div style="position:absolute;left:292px;top:949px;width:1599px;height:1px;background:#dde2e7"></div>
<div class="a" style="left:0;top:934px;width:267px;height:1px;background:#4a5060"></div>
<div class="a" style="left:267px;top:0;width:1px;height:935px;background:#fafafa"></div>
<svg class="ic" style="left:0;top:923px" width="12" height="12" viewBox="0 923 12 12"><path d="M0 924.5 A10.5 10.5 0 0 0 10.5 935 L0 935 Z" fill="#1a0540"/><path d="M0.5 924.5 A10 10 0 0 0 10.5 934.5" fill="none" stroke="#4a5060" stroke-width="1"/></svg>
<svg class="ic" style="left:1908px;top:923px" width="12" height="12" viewBox="1908 923 12 12"><path d="M1920 924 A11 11 0 0 1 1909 935 L1920 935 Z" fill="#10288a"/><path d="M1919.5 924 A10.5 10.5 0 0 1 1909 934.5" fill="none" stroke="#ffffff" stroke-width="1"/></svg>
</div>
</body></html>
